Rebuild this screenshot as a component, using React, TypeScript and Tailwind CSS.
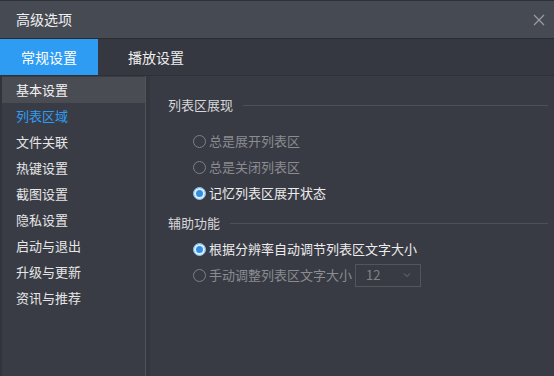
import { useState } from 'react'

function Radio({ checked, disabled, label }: { checked?: boolean; disabled?: boolean; label: string }) {
  return (
    <div className="flex items-center gap-[3px] h-[26px]">
      {checked ? (
        <span className="w-[13px] h-[13px] rounded-full border border-[#9ec9ee] bg-[#2f8fe0] shadow-[inset_0_0_0_2px_#dfeefb]" />
      ) : (
        <span className="w-[13px] h-[13px] rounded-full border border-[#7d8087]" />
      )}
      <span className={disabled ? 'text-[#8a8c91]' : 'text-[#ececec]'}>{label}</span>
    </div>
  )
}

function Section({ title, top, children }: { title: string; top?: boolean; children: React.ReactNode }) {
  return (
    <div>
      <div className="flex items-center gap-[10px] h-[26px]">
        <span className="text-[#d6d7d9]">{title}</span>
        <div className="flex-1 h-px bg-[#4d5058] mr-[6px]" />
      </div>
      <div className={`pl-[25px] ${top ? 'pt-[10px]' : ''}`}>{children}</div>
    </div>
  )
}

function App() {
  const [tab] = useState(0)
  const menu = ['基本设置', '列表区域', '文件关联', '热键设置', '截图设置', '隐私设置', '启动与退出', '升级与更新', '资讯与推荐']

  return (
    <div
      className="w-[554px] h-[376px] bg-[#393b44] flex flex-col overflow-hidden text-[13px]"
      style={{ fontFamily: '"Noto Sans CJK SC", "Liberation Sans", sans-serif' }}
    >
      <div className="h-[39px] shrink-0 bg-[#464a53] border-t border-[#2f3138] border-b border-b-[#2a2c32] flex items-center justify-between pl-[16px] pr-[9px]">
        <span className="text-[14px] text-[#f0f0f0]">高级选项</span>
        <svg width="12" height="12" viewBox="0 0 12 12">
          <path d="M1 1 L11 11 M11 1 L1 11" stroke="#9a9da3" strokeWidth="1.2" />
        </svg>
      </div>

      <div className="h-[37px] shrink-0 bg-[#353840] flex items-stretch border-b border-[#2f3138]">
        <div className={`w-[98px] flex items-center justify-center text-[14px] ${tab === 0 ? 'bg-[#2f9cf4] text-white' : ''}`}>
          常规设置
        </div>
        <div className="w-[116px] flex items-center justify-center text-[14px] text-[#eeeeee]">播放设置</div>
      </div>

      <div className="flex flex-1">
        <div className="w-[146px] shrink-0 bg-[#393c45] border-r border-[#50535b] border-l-2 border-l-[#32343b] pt-[1px]">
          {menu.map((m, i) => (
            <div
              key={m}
              className={`h-[26px] flex items-center pl-[14px] ${i === 0 ? 'bg-[#4a4c54] text-[#f2f2f2]' : i === 1 ? 'text-[#2f9cf4]' : 'text-[#e6e6e6]'}`}
            >
              {m}
            </div>
          ))}
        </div>
        <div className="w-[4px] bg-[#35373f]" />

        <div className="flex-1 pl-[18px] pt-[16px] flex flex-col gap-[4px]">
          <Section title="列表区展现" top>
            <Radio disabled label="总是展开列表区" />
            <Radio disabled label="总是关闭列表区" />
            <Radio checked label="记忆列表区展开状态" />
          </Section>
          <Section title="辅助功能">
            <Radio checked label="根据分辨率自动调节列表区文字大小" />
            <div className="flex items-center">
              <Radio disabled label="手动调整列表区文字大小" />
              <div className="ml-[3px] w-[66px] h-[23px] border border-[#52555c] flex items-center justify-between pl-[10px] pr-[9px] text-[#7f8288]">
                <span>12</span>
                <svg width="8" height="6" viewBox="0 0 8 6">
                  <path d="M1 1.5 L4 4.5 L7 1.5" stroke="#6f7278" fill="none" strokeWidth="1" />
                </svg>
              </div>
            </div>
          </Section>
        </div>
      </div>
    </div>
  )
}

export default App
